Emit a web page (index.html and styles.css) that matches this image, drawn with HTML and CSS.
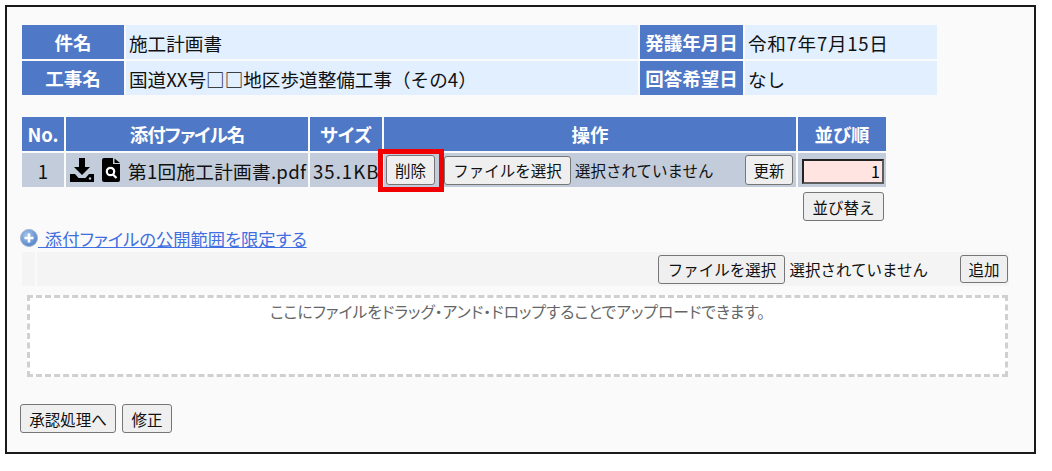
FILE: index.html
```html
<!DOCTYPE html>
<html lang="ja">
  <head>
    <meta charset="UTF-8" />
    <title>施工計画書</title>
    <link rel="stylesheet" href="styles.css">
  </head>
  <body>
    <div class="frame">
      <table class="info">
        <tr>
          <th class="w-name">件名</th>
          <td class="w-title">施工計画書</td>
          <th class="w-date">発議年月日</th>
          <td class="w-value date">令和7年7月15日</td>
        </tr>
        <tr>
          <th>工事名</th>
          <td>国道XX号□□地区歩道整備工事（その4）</td>
          <th>回答希望日</th>
          <td>なし</td>
        </tr>
      </table>

      <table class="files">
        <tr>
          <th class="c-no">No.</th>
          <th class="c-file">添付ファイル名</th>
          <th class="c-size">サイズ</th>
          <th class="c-ops">操作</th>
          <th class="c-sort">並び順</th>
        </tr>
        <tr class="row">
          <td class="center">1</td>
          <td>
            <div class="file-name">
              <svg class="ico-dl" viewBox="0 0 24 24" width="24" height="24">
                <path d="M9 0h6v9h5l-8 8-8-8h5z" />
                <path d="M0 16h5l3.500 4h7l3.500-4h5v8H0z" />
                <circle cx="20" cy="20.500" r="1.200" fill="#c2ccda" />
              </svg>
              <svg class="ico-doc" viewBox="0 0 18 24" width="18" height="24">
                <path d="M2 0h9v6h7v16a2 2 0 0 1-2 2H2a2 2 0 0 1-2-2V2a2 2 0 0 1 2-2z" />
                <path d="M12.500 0.500L18 5h-5.500z" />
                <circle cx="8.500" cy="13.500" r="3.700" fill="none" stroke="#fff" stroke-width="2.200" />
                <path d="M11 16.500l3.500 3.500" stroke="#fff" stroke-width="2.200" />
              </svg>
              <span class="pdf">第1回施工計画書.pdf</span>
            </div>
          </td>
          <td class="size">35.1KB</td>
          <td>
            <div class="ops">
              <button class="btn del-btn">削除</button>
              <button class="btn pick-btn">ファイルを選択</button>
              <span class="none">選択されていません</span>
              <button class="btn upd-btn">更新</button>
            </div>
          </td>
          <td class="sort-cell"><input class="sort-input" type="text" value="1" /></td>
        </tr>
        <tr>
          <td class="blank" colspan="4"></td>
          <td class="blank"><button class="btn sort-btn">並び替え</button></td>
        </tr>
      </table>

      <div class="highlight"></div>

      <div class="limit">
        <svg class="ico-plus" viewBox="0 0 18 18" width="18" height="18">
          <defs>
            <radialGradient id="plusBg" cx="0.4" cy="0.35" r="0.7">
              <stop offset="0" stop-color="#a9c8f2" />
              <stop offset="1" stop-color="#4d7fc4" />
            </radialGradient>
          </defs>
          <circle cx="9" cy="9" r="8.500" fill="url(#plusBg)" stroke="#9fb4cf" />
          <path d="M4.500 9h9M9 4.500v9" stroke="#fff" stroke-width="2.500" />
        </svg>
        <a href="#" class="limit-link">&nbsp;添付ファイルの公開範囲を限定する</a>
      </div>

      <div class="strip">
        <div class="strip-side"></div>
        <div class="strip-main">
          <button class="btn pick-btn add-pick">ファイルを選択</button>
          <span class="none add-none">選択されていません</span>
          <button class="btn add-btn">追加</button>
        </div>
      </div>

      <div class="drop">ここにファイルをドラッグ・アンド・ドロップすることでアップロードできます。</div>

      <div class="actions">
        <button class="btn act-btn act-main">承認処理へ</button>
        <button class="btn act-btn act-fix">修正</button>
      </div>
    </div>
  </body>
</html>
```

FILE: styles.css
```css
body {
  margin: 0;
  background: #fff;
  font-family: "Noto Sans CJK JP", "Noto Sans", sans-serif;
  color: #111;
}

.frame {
  position: relative;
  box-sizing: border-box;
  width: 1031px;
  height: 449px;
  margin: 5px 0 0 5px;
  padding: 16px 0 0 13px;
  background: #fafafa;
  border: 2px solid #1a1a1a;
}

table {
  border-collapse: separate;
  border-spacing: 2px;
  table-layout: fixed;
}

th {
  padding: 0;
  background: #4f78c6;
  color: #fff;
  font-size: 18.500px;
  font-weight: 700;
  font-feature-settings: "palt";
  text-align: center;
}

td {
  padding: 0;
  font-size: 18.600px;
  white-space: nowrap;
}

/* top block */
.info {
  width: 919px;
}
.info tr {
  height: 34px;
}
.info td {
  padding-left: 3px;
  background: #e2effe;
}
.w-name { width: 102px; }
.w-title { width: 509px; }
.w-date { width: 103px; }
.w-value { width: 189px; }
.date {
  letter-spacing: 0.700px;
}

/* file list */
.files {
  width: 868px;
  margin-top: 18px;
}
.files tr {
  height: 34px;
}
.files .row td {
  background: #c2ccda;
}
.files .row td.size {
  padding-left: 3px;
  letter-spacing: 1px;
  overflow: visible;
}
.c-no { width: 42px; }
.c-file {
  width: 242px;
  letter-spacing: -1px;
}
.c-size { width: 72px; }
.c-ops { width: 412px; }
.c-sort { width: 88px; }

.center {
  text-align: center;
}

.file-name {
  display: flex;
  align-items: center;
  padding-left: 4px;
}
.ico-dl {
  margin-right: 8px;
  fill: #000;
}
.ico-doc {
  margin-right: 8px;
  fill: #000;
}
.pdf {
  letter-spacing: 0.300px;
}

.ops {
  display: flex;
  align-items: center;
  padding: 0 3px 0 2px;
}

.btn {
  box-sizing: border-box;
  padding: 0;
  background: #efefef;
  border: 1px solid #767676;
  border-radius: 3px;
  color: #111;
  font-family: inherit;
  font-size: 15.500px;
  white-space: nowrap;
}
.del-btn {
  width: 49px;
  height: 30px;
  margin-right: 9px;
}
.pick-btn {
  width: 127px;
  height: 29px;
}
.none {
  font-size: 15.500px;
  margin-left: 4px;
}
.upd-btn {
  width: 48px;
  height: 30px;
  margin-left: auto;
}

.sort-input {
  box-sizing: border-box;
  display: block;
  width: 82px;
  height: 25px;
  margin: 2px 0 0 4px;
  padding: 0 2px;
  background: #ffe4e1;
  border: 2px solid #5c5c5c;
  border-top-color: #222;
  border-left-color: #222;
  font-family: inherit;
  font-size: 16px;
  text-align: right;
}

.blank {
  background: none;
}
.files tr:last-child {
  height: auto;
}
.sort-btn {
  width: 81px;
  height: 29px;
  display: block;
  margin: 3px 0 0 5px;
}

/* red marker over the delete button */
.highlight {
  position: absolute;
  left: 371px;
  top: 142px;
  width: 66px;
  height: 43px;
  box-sizing: border-box;
  border: 5px solid #f00000;
}

.limit {
  display: flex;
  align-items: center;
  margin-top: 2px;
  height: 26px;
}
.limit-link {
  color: #3f6fe0;
  font-size: 17.300px;
  font-feature-settings: "palt";
  word-spacing: 3px;
}

.strip {
  display: flex;
  gap: 2px;
  width: 987px;
  height: 34px;
  margin: 1px 0 0 2px;
}
.strip-side {
  width: 13px;
  background: #f4f4f4;
}
.strip-main {
  flex: 1;
  display: flex;
  align-items: center;
  justify-content: flex-end;
  padding-right: 1px;
  background: #f4f4f4;
}
.add-none {
  margin-left: 4px;
  margin-right: 32px;
}
.add-btn {
  width: 48px;
  height: 28px;
}

.drop {
  box-sizing: border-box;
  width: 981px;
  height: 82px;
  margin: 9px 0 0 7px;
  padding-top: 2px;
  background: #fff;
  border: 3px dashed #d0d0d0;
  color: #666;
  font-size: 15.800px;
  font-feature-settings: "palt";
  text-align: center;
}

.actions {
  display: flex;
  gap: 6px;
  margin-top: 27px;
}
.act-btn {
  height: 29px;
}
.act-main {
  width: 96px;
}
.act-fix {
  width: 50px;
}
```
